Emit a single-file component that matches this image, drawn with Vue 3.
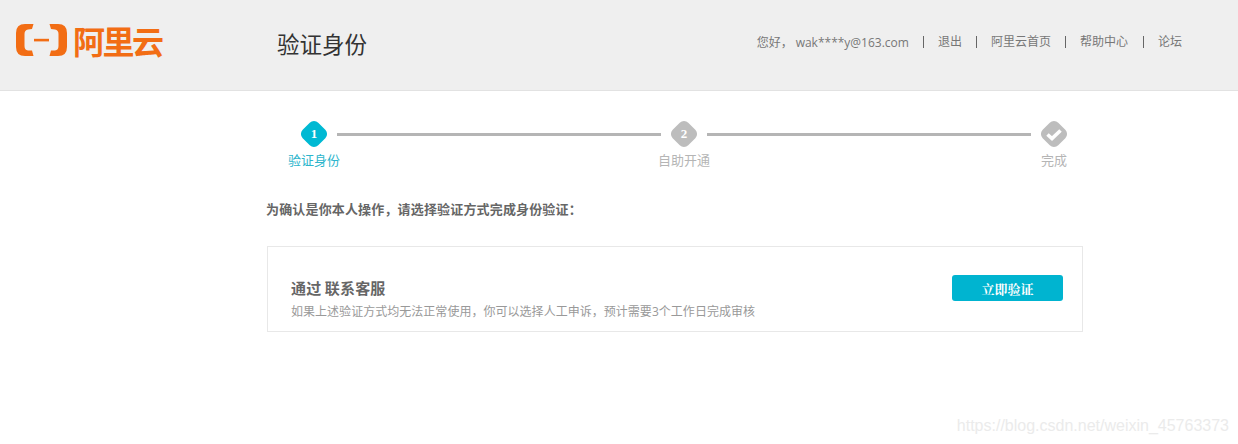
<script setup>
const navItems = ['退出', '阿里云首页', '帮助中心', '论坛']
const steps = [
  { label: '验证身份', active: true },
  { label: '自助开通' },
  { label: '完成' },
]
</script>

<template>
  <div class="page">
    <header class="header">
      <div class="brand">
        <svg class="logo-mark" viewBox="0 0 51 32" width="51" height="32" aria-hidden="true">
          <path fill="#f26d14" d="M17.500 0H9Q0 0 0 9V23Q0 32 9 32H17.500L16 26.500H12Q8.500 26 8.500 22V10Q8.500 6 12 5.500L16 5Z" />
          <path fill="#f26d14" d="M33.500 0H42Q51 0 51 9V23Q51 32 42 32H33.500L35 26.500H39Q42.500 26 42.500 22V10Q42.500 6 39 5.500L35 5Z" />
          <rect fill="#f26d14" x="18" y="14.800" width="15" height="2.600" />
        </svg>
        <span class="logo-text">阿里云</span>
      </div>
      <h1 class="title">验证身份</h1>
      <nav class="nav">
        <span class="greeting">您好，</span>
        <span class="account">wak****y@163.com</span>
        <a v-for="item in navItems" :key="item" class="nav-link">{{ item }}</a>
      </nav>
    </header>

    <main class="main">
      <div class="track">
        <template v-for="(step, i) in steps" :key="step.label">
          <span class="node" :class="{ active: step.active }">
            <span class="diamond"></span>
            <svg v-if="i === 2" class="check" viewBox="0 0 16 12" width="16" height="13" aria-hidden="true">
              <path d="M1.500 6 6 10 14.500 2" fill="none" stroke="#fff" stroke-width="3.600" />
            </svg>
            <span v-else class="num">{{ i + 1 }}</span>
          </span>
          <span v-if="i < 2" class="line"></span>
        </template>
      </div>
      <div class="labels">
        <span v-for="step in steps" :key="step.label" class="label" :class="{ active: step.active }">{{ step.label }}</span>
      </div>

      <p class="intro">为确认是你本人操作，请选择验证方式完成身份验证：</p>

      <section class="card">
        <div class="card-text">
          <h2 class="card-title">通过 联系客服</h2>
          <p class="card-desc">如果上述验证方式均无法正常使用，你可以选择人工申诉，预计需要3个工作日完成审核</p>
        </div>
        <button class="verify" type="button">立即验证</button>
      </section>
    </main>

    <div class="watermark">https://blog.csdn.net/weixin_45763373</div>
  </div>
</template>

<style>
html, body { margin: 0; background: #fff; }
</style>

<style scoped>
.page {
  position: relative;
  width: 1238px;
  height: 444px;
  overflow: hidden;
  font-family: "Open Sans", "Noto Sans CJK SC", sans-serif;
  background: #fff;
}
.header {
  box-sizing: border-box;
  display: flex;
  align-items: center;
  height: 91px;
  padding: 0 56px 6px 16px;
  background: #efefef;
  border-bottom: 1px solid #e2e2e2;
}
.brand {
  display: flex;
  align-items: center;
  width: 261px;
  margin-top: -4px;
}
.logo-mark { flex: none; }
.logo-text {
  margin-left: 6px;
  font-family: "Noto Sans CJK SC", sans-serif;
  font-size: 32px;
  letter-spacing: -2.500px;
  line-height: 32px;
  font-weight: 700;
  color: #f26d14;
}
.title {
  margin: 0;
  padding-top: 1px;
  font-family: "Noto Sans CJK SC", sans-serif;
  font-size: 22.500px;
  font-weight: 400;
  line-height: 32px;
  color: #333;
}
.nav {
  display: flex;
  align-items: center;
  margin-left: auto;
  font-size: 12px;
  color: #777;
}
.greeting { width: 39px; }
.account { padding-right: 14px; }
.nav-link {
  padding-left: 14px;
  padding-right: 14px;
  border-left: 1px solid #666;
  line-height: 12px;
}
.nav-link:nth-last-child(2) { padding-right: 15px; }
.nav-link:last-child { padding-right: 0; }
.main {
  width: 816px;
  margin-left: 267px;
}
.track {
  display: flex;
  align-items: center;
  gap: 9px;
  height: 28px;
  margin: 29px 0 0 33px;
  width: 768px;
}
.node {
  position: relative;
  flex: none;
  display: flex;
  align-items: center;
  justify-content: center;
  width: 28px;
  height: 28px;
}
.diamond {
  position: absolute;
  left: 3px;
  top: 3px;
  width: 22px;
  height: 22px;
  border-radius: 6px;
  background: #bdbdbd;
  transform: rotate(45deg);
}
.node.active .diamond { background: #00b9d3; }
.num {
  position: relative;
  font-family: "Liberation Serif", serif;
  font-size: 13px;
  font-weight: 700;
  color: #fff;
}
.check { position: relative; }
.line {
  flex: 1;
  height: 3px;
  background: #b5b5b5;
}
.labels {
  display: grid;
  grid-template-columns: 52px 52px 52px;
  column-gap: 318px;
  margin: 2px 0 0 21px;
  height: 20px;
  line-height: 20px;
}
.label {
  text-align: center;
  font-family: "Noto Sans CJK SC", sans-serif;
  font-size: 13px;
  color: #b5b5b5;
}
.label.active { color: #2cb5cc; }
.intro {
  margin: 29px 0 0 -1px;
  font-family: "Noto Sans CJK SC", sans-serif;
  font-size: 13px;
  letter-spacing: 0.160px;
  font-weight: 700;
  line-height: 20px;
  color: #666;
}
.card {
  box-sizing: border-box;
  display: flex;
  align-items: center;
  justify-content: space-between;
  width: 816px;
  height: 86px;
  margin-top: 27px;
  padding: 19px 19px 0 23px;
  border: 1px solid #e8e8e8;
}
.card-title {
  margin: 0;
  font-family: "Noto Sans CJK SC", sans-serif;
  font-size: 15px;
  letter-spacing: 0.150px;
  font-weight: 700;
  line-height: 20px;
  color: #666;
}
.card-desc {
  margin: 6px 0 0;
  font-size: 12px;
  letter-spacing: 0.030px;
  line-height: 16px;
  color: #999;
}
.verify {
  width: 111px;
  height: 26px;
  margin-top: -21px;
  padding: 0;
  border: 0;
  border-radius: 3px;
  background: #00b4d0;
  font-family: "Noto Serif CJK SC", "Noto Sans CJK SC", serif;
  font-size: 13px;
  font-weight: 700;
  color: #fff;
}
.watermark {
  position: absolute;
  right: 9px;
  top: 416px;
  font-family: "Liberation Sans", sans-serif;
  font-size: 16px;
  line-height: 20px;
  color: #ebebeb;
}
</style>
